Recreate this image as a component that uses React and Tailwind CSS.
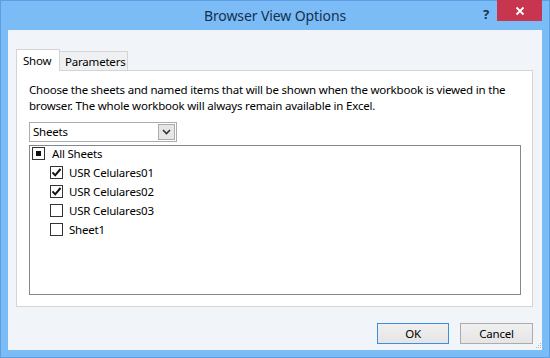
import { useState } from 'react';

const font = { fontFamily: '"Noto Sans", "Open Sans", sans-serif' };

function Box({ state }) {
  return (
    <span className="w-[13px] h-[13px] border border-[#333] bg-white flex items-center justify-center flex-shrink-0">
      {state === 'mixed' && <span className="w-[5px] h-[5px] bg-[#111]" />}
      {state === true && (
        <svg width="11" height="11" viewBox="0 0 11 11">
          <path d="M1.5 5.3 L4.2 8.3 L9.5 2" fill="none" stroke="#111" strokeWidth="2" />
        </svg>
      )}
    </span>
  );
}

export default function App() {
  const [items, setItems] = useState([
    { name: 'USR Celulares01', on: true },
    { name: 'USR Celulares02', on: true },
    { name: 'USR Celulares03', on: false },
    { name: 'Sheet1', on: false },
  ]);
  const [tab, setTab] = useState('show');
  const n = items.filter(i => i.on).length;
  const all = n === 0 ? false : n === items.length ? true : 'mixed';

  const toggle = (idx) => setItems(p => p.map((it, i) => i === idx ? { ...it, on: !it.on } : it));
  const toggleAll = () => setItems(p => p.map(it => ({ ...it, on: all !== true })));

  return (
    <div className="w-[550px] h-[358px] bg-[#7cbcf6] border border-[#5d9de3] flex flex-col text-[11.5px] tracking-[-0.2px] text-black" style={font}>
      {/* Title bar */}
      <div className="h-[29px] relative flex items-center justify-center">
        <span className="text-[14px] tracking-[-0.1px] text-[#14304f] -mt-[1px]">Browser View Options</span>
        <span className="absolute left-[482px] top-[4px] text-[13px] font-bold text-[#14304f]">?</span>
        <button className="absolute right-[7px] top-[-1px] w-[45px] h-[21px] bg-[#c7354f] flex items-center justify-center">
          <svg width="10" height="10" viewBox="0 0 10 10">
            <path d="M1.5 1.5 L8.5 8.5 M8.5 1.5 L1.5 8.5" stroke="#fff" strokeWidth="1.8" />
          </svg>
        </button>
      </div>

      {/* Client */}
      <div className="flex-1 mx-[7px] mb-[7px] bg-[#f1f4f8] flex flex-col pl-[8px] pt-[18px] relative">
        <div className="flex items-end h-[22px]">
          <button onClick={() => setTab('show')}
            className={`w-[44px] px-[6px] text-left border border-[#d4d4d4] border-b-0 relative z-10 ${tab === 'show' ? 'h-[22px] bg-white -mb-[1px] leading-[20px]' : 'h-[19px] bg-[#eef0f2] leading-[18px]'}`}>
            Show
          </button>
          <button onClick={() => setTab('params')}
            className={`w-[68px] px-[5px] text-left border border-[#d4d4d4] border-b-0 border-l-0 relative z-10 ${tab === 'params' ? 'h-[22px] bg-white -mb-[1px] leading-[20px]' : 'h-[19px] bg-[#eef0f2] leading-[20px]'}`}>
            Parameters
          </button>
        </div>

        <div className="w-[517px] h-[237px] bg-white border border-[#d4d4d4] px-[12px] pt-[11px]">
          {tab === 'show' && (
            <>
              <p className="leading-[16px] whitespace-nowrap">
                Choose the sheets and named items that will be shown when the workbook is viewed in the<br />
                browser. The whole workbook will always remain available in Excel.
              </p>
              <div className="mt-[8px] w-[148px] h-[20px] border border-[#acacac] flex items-center justify-between pl-[3px] pr-[1px]">
                <span>Sheets</span>
                <span className="w-[17px] h-[16px] bg-[#e6e6e6] border border-[#acacac] flex items-center justify-center">
                  <svg width="9" height="6" viewBox="0 0 9 6">
                    <path d="M1 1 L4.5 4.5 L8 1" fill="none" stroke="#333" strokeWidth="1.6" />
                  </svg>
                </span>
              </div>
              <div className="mt-[3px] w-[492px] h-[150px] border border-[#828790] overflow-hidden">
                <div className="-mt-[2px]">
                  <div className="h-[19px] flex items-center pl-[2px] gap-[7px] cursor-default" onClick={toggleAll}>
                    <Box state={all} />
                    <span>All Sheets</span>
                  </div>
                  {items.map((it, i) => (
                    <div key={it.name} className="h-[19px] flex items-center pl-[20px] gap-[6px] cursor-default" onClick={() => toggle(i)}>
                      <Box state={it.on} />
                      <span>{it.name}</span>
                    </div>
                  ))}
                </div>
              </div>
            </>
          )}
        </div>

        <div className="flex justify-end gap-[11px] mt-[16px] pr-[9px]">
          <button className="w-[72px] h-[21px] border border-[#3c8fe0] bg-gradient-to-b from-[#f0f0f0] to-[#e5e5e5]">OK</button>
          <button className="w-[73px] h-[21px] border border-[#acacac] bg-gradient-to-b from-[#f0f0f0] to-[#e5e5e5]">Cancel</button>
        </div>

        {/* resize grip */}
        <div className="absolute right-[1px] bottom-[2px] grid grid-cols-3 gap-[1px]">
          {[0,0,1,0,1,1,1,1,1].map((v, i) => (
            <span key={i} className={`w-[1px] h-[1px] ${v ? 'bg-[#b8b8b8]' : ''}`} />
          ))}
        </div>
      </div>
    </div>
  );
}
